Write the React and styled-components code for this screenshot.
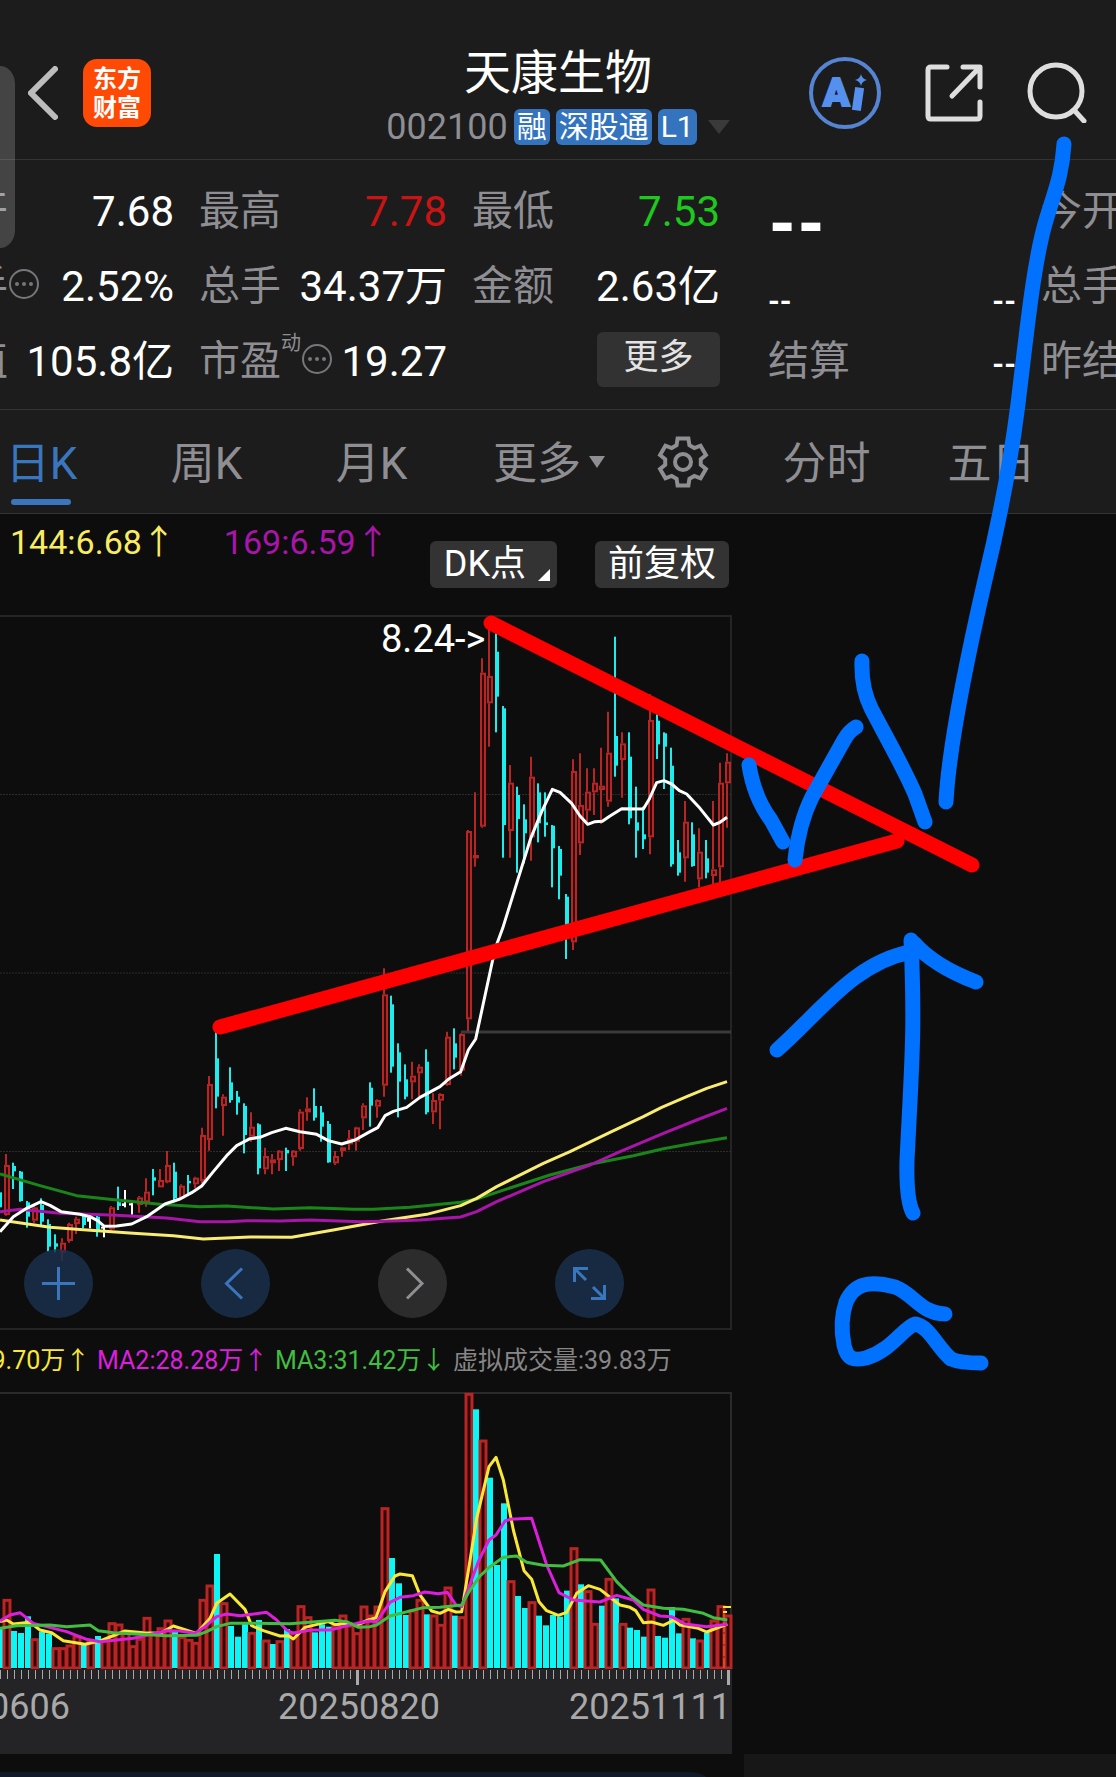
import styled, { createGlobalStyle, css } from "styled-components";

const GlobalStyle = createGlobalStyle`
  * {
    box-sizing: border-box;
  }

  body {
    margin: 0;
    background-color: #0d0d0d;
    color: white;
    font-family: Roboto, "Noto Sans CJK SC", sans-serif;
    overflow-x: hidden;
  }

  button {
    border: none;
    padding: 0;
    background: none;
    color: inherit;
    font-family: inherit;
    cursor: pointer;
  }

  svg {
    display: block;
  }
`;

const RED = "#b92525";
const CYAN = "#1eeded";

// [direction, high, body top, body bottom, low], one unit is a third of a pixel
const earlyCandles = [
  ["d", 720, 727, 772, 775], ["u", 612, 645, 795, 797], ["d", 638, 648, 664, 717], ["d", 663, 665, 753, 755],
  ["d", 753, 757, 800, 833], ["u", 765, 772, 812, 818], ["d", 745, 765, 815, 825], ["d", 808, 822, 890, 905],
  ["d", 853, 880, 890, 907], ["u", 865, 878, 908, 933], ["u", 818, 822, 873, 878], ["u", 800, 806, 822, 852],
  ["d", 797, 800, 825, 835], ["f", 803, 803, 815, 835], ["d", 797, 800, 845, 860], ["f", 830, 830, 836, 862],
  ["u", 768, 772, 838, 840], ["d", 710, 757, 768, 780], ["f", 720, 760, 768, 772], ["f", 760, 760, 766, 794],
  ["u", 738, 742, 765, 788], ["u", 685, 725, 757, 770], ["d", 657, 682, 692, 736], ["u", 657, 690, 712, 712],
  ["u", 603, 645, 697, 700], ["d", 638, 665, 745, 757], ["u", 703, 707, 745, 745], ["d", 675, 693, 700, 730],
  ["u", 680, 683, 703, 715], ["u", 533, 555, 693, 700], ["u", 378, 402, 570, 602], ["d", 245, 325, 440, 475],
  ["u", 433, 440, 468, 557], ["d", 352, 397, 450, 458], ["d", 423, 440, 458, 494], ["d", 460, 468, 555, 610],
  ["u", 487, 530, 560, 575], ["d", 520, 523, 655, 673], ["u", 593, 618, 658, 673], ["u", 612, 628, 640, 673],
  ["u", 600, 602, 630, 663], ["d", 593, 600, 610, 663], ["u", 600, 602, 622, 647], ["u", 478, 485, 597, 602],
  ["u", 442, 475, 487, 512], ["d", 415, 468, 503, 512], ["d", 468, 487, 530, 575], ["d", 513, 522, 637, 638],
  ["u", 603, 618, 640, 645], ["u", 590, 592, 603, 620], ["u", 540, 565, 583, 600], ["u", 530, 532, 575, 602],
  ["u", 460, 466, 505, 540], ["d", 397, 413, 467, 530], ["u", 448, 450, 470, 503], ["u", 55, 133, 407, 440],
  ["d", 137, 163, 350, 368], ["d", 280, 307, 395, 502], ["d", 343, 388, 440, 448], ["u", 335, 377, 397, 448],
  ["u", 343, 350, 370, 440], ["d", 298, 335, 487, 493], ["u", 430, 450, 487, 522], ["u", 430, 432, 452, 538],
  ["u", 245, 260, 405, 407], ["d", 235, 280, 323, 358], ["u", 250, 252, 362, 377],
];

const lateCandles = [
  ["u", 690, 693, 1258, 1293], ["u", 577, 765, 775, 800], ["u", 175, 218, 680, 683], ["u", 60, 228, 310, 440],
  ["d", 100, 155, 290, 397], ["d", 318, 325, 675, 773], ["u", 495, 548, 693, 773], ["d", 560, 585, 657, 818],
  ["d", 613, 658, 700, 790], ["u", 470, 530, 712, 782], ["d", 550, 577, 670, 727], ["d", 577, 667, 675, 710],
  ["d", 675, 677, 745, 862], ["d", 738, 747, 827, 898], ["d", 882, 890, 975, 1077], ["u", 478, 513, 1027, 1050],
  ["u", 460, 615, 730, 765], ["u", 505, 575, 632, 665], ["u", 505, 548, 577, 645], ["u", 443, 557, 570, 672],
  ["u", 335, 458, 605, 620], ["d", 110, 408, 497, 530], ["u", 397, 430, 480, 593], ["d", 397, 470, 655, 673],
  ["d", 560, 667, 692, 773], ["d", 620, 703, 718, 747], ["u", 283, 360, 712, 763], ["d", 343, 362, 433, 477],
  ["d", 397, 400, 440, 567], ["d", 443, 497, 793, 800], ["d", 720, 757, 818, 827], ["u", 603, 665, 775, 845],
  ["d", 667, 703, 798, 800], ["u", 685, 755, 838, 862], ["d", 720, 775, 818, 835], ["u", 603, 808, 828, 855],
  ["u", 488, 548, 802, 850], ["u", 460, 485, 550, 683],
];

const candles = [
  ...earlyCandles.map(([dir, ...v]) => [dir, ...v.map((n) => 335 + n / 3)]),
  ...lateCandles.map(([dir, ...v]) => [dir, ...v.map((n) => n / 3 - 15)]),
];

const priceLines = [
  {
    color: "#1a861a",
    points: "0,672 120,707 230,737 350,750 480,763 600,770 680,768 820,777 930,773 1060,778 1120,778 1230,772 1382,757 1430,747 1490,727 1650,675 1770,643 1900,617 1990,596 2080,580 2181,563",
  },
  {
    color: "#f9ec72",
    points: "0,810 150,832 250,839 400,850 520,857 610,867 750,861 875,862 1000,840 1150,812 1280,793 1382,767 1430,745 1490,710 1630,640 1710,605 1830,547 1930,500 1985,472 2060,440 2120,415 2181,395",
  },
  {
    color: "#a915a9",
    points: "0,785 60,778 180,790 350,796 500,804 600,815 680,815 740,812 840,813 930,810 1080,815 1180,813 1260,810 1382,801 1430,785 1490,755 1630,695 1770,645 1860,605 1990,550 2090,510 2181,475",
  },
  {
    color: "#ffffff",
    points: "0,845 40,800 80,775 123,755 150,766 183,785 240,793 270,800 293,812 313,829 350,828 395,822 440,800 495,762 540,747 575,728 605,708 640,665 680,617 710,587 750,566 780,562 815,548 857,535 900,545 950,553 985,572 1025,582 1065,570 1110,545 1133,533 1155,497 1180,484 1220,472 1260,442 1320,410 1345,388 1382,365 1405,300 1427,267 1478,30 1492,-22 1508,-65 1550,-200 1592,-335 1625,-415 1657,-482 1680,-473 1715,-440 1740,-402 1763,-377 1785,-385 1807,-386 1830,-402 1865,-424 1930,-423 1948,-453 1970,-502 1992,-508 2015,-498 2038,-478 2060,-468 2100,-425 2140,-375 2160,-383 2181,-398",
  },
];

const volumes = [
  "d925", "u838", "d933", "d939", "d889", "u956", "d935", "d941", "u983", "u983", "u975", "u948", "d970", "u963",
  "d948", "u960", "u908", "u912", "u935", "u977", "u955", "u892", "u940", "u923", "u900", "d935", "u950", "u958",
  "u967", "u838", "u795", "d702", "u848", "d918", "d950", "d910", "u937", "d900", "u960", "d972", "u962", "d927",
  "u935", "u857", "u890", "d937", "d913", "d920", "u912", "u885", "u915", "u938", "u858", "u885", "u858", "u563",
  "d714", "d790", "d885", "u870", "u838", "d883", "u885", "u913", "u801", "d887", "u890", "u220", "d268", "u360",
  "d473", "d735", "d550", "u782", "d828", "d864", "u845", "d887", "d916", "d885", "d890", "d812", "u683", "d793",
  "u812", "u910", "d857", "u775", "d835", "u910", "d923", "d930", "d950", "u807", "d948", "d953", "d861", "d940",
  "u895", "d955", "u960", "d938", "u900", "u857", "u885",
];

const volumeLines = [
  {
    color: "#fbe836",
    points: "0,905 20,900 40,912 90,907 120,930 155,938 190,962 255,973 300,963 375,933 430,938 480,940 520,918 590,940 630,895 650,850 690,822 735,868 755,917 790,932 840,948 865,947 880,957 915,922 985,905 1005,914 1040,910 1070,915 1105,900 1128,893 1155,815 1185,768 1200,762 1237,767 1260,825 1295,873 1320,880 1345,868 1368,876 1385,875 1407,740 1430,595 1467,440 1488,412 1510,480 1540,630 1572,752 1595,778 1617,845 1640,872 1675,886 1700,877 1730,820 1765,797 1800,808 1860,855 1890,862 1907,872 1930,908 1955,906 1990,916 2022,900 2040,915 2095,925 2120,936 2182,912",
  },
  {
    color: "#dd1edd",
    points: "0,903 30,885 60,878 100,910 200,935 260,958 300,965 400,955 500,932 540,933 585,940 615,920 650,890 680,882 720,887 800,877 830,900 860,930 880,940 930,930 990,930 1070,910 1110,903 1130,905 1170,847 1200,832 1240,827 1275,816 1315,821 1342,817 1368,855 1385,860 1407,800 1435,725 1467,660 1488,645 1515,603 1530,598 1595,595 1640,735 1677,818 1720,840 1800,846 1850,826 1900,840 1930,868 1980,888 2015,890 2055,912 2120,920 2182,913",
  },
  {
    color: "#41bd41",
    points: "0,925 50,917 150,915 200,920 270,915 295,932 340,938 420,943 500,947 590,946 620,935 650,920 690,910 760,910 870,911 1005,901 1040,905 1075,922 1110,920 1130,915 1170,888 1270,863 1320,862 1385,855 1407,815 1440,768 1470,740 1510,712 1550,708 1580,727 1630,736 1690,738 1740,719 1802,720 1850,785 1890,825 1930,855 1990,865 2050,868 2110,880 2140,893 2182,900",
  },
];

const scalePoints = (points, base) =>
  points
    .split(" ")
    .map((p) => {
      const [x, y] = p.split(",");
      return `${x / 3},${base + y / 3}`;
    })
    .join(" ");

const Page = styled.div`
  position: relative;
  overflow: hidden;
`;

const Header = styled.header`
  display: grid;
  grid-template-columns: 1fr auto 1fr;
  align-items: center;
  padding: 40px 28px 14px;
  background-color: #1c1c1c;
  border-bottom: 1px solid #333;
`;

const HeaderSide = styled.div`
  display: flex;
  align-items: center;
  justify-content: ${(props) => (props.$end ? "flex-end" : "flex-start")};
  gap: ${(props) => (props.$end ? "44px" : "25px")};
`;

const Logo = styled.div`
  width: 68px;
  height: 68px;
  padding: 3px 0;
  border-radius: 14px;
  background-color: #ff4a05;
  font-family: "Noto Sans CJK SC", sans-serif;
  font-size: 24px;
  font-weight: 700;
  line-height: 29px;
  text-align: center;
`;

const TitleBlock = styled.div`
  display: flex;
  flex-direction: column;
  align-items: center;
  gap: 3px;
`;

const Title = styled.h1`
  margin: 0;
  font-size: 47px;
  font-weight: 400;
  line-height: 66px;
`;

const SubTitle = styled.div`
  display: flex;
  align-items: center;
  gap: 6px;
  color: #8e8e93;
  font-size: 36px;
  line-height: 36px;
`;

const Tag = styled.span`
  padding: 0 3px;
  border-radius: 6px;
  background-color: #3474bf;
  color: white;
  font-size: 30px;
  line-height: 36px;
`;

const Caret = styled.span`
  border: solid transparent;
  border-width: ${(props) => (props.$small ? "12px 8px 0" : "14px 11px 0")};
  border-top-color: ${(props) => (props.$small ? "#8e8e93" : "#3a3a3a")};
  margin: ${(props) => (props.$small ? "4px 0 0 8px" : "0 0 0 5px")};
`;

const Split = styled.div`
  display: grid;
  grid-template-columns: 2fr 1fr;
`;

const Bar = styled(Split)`
  background-color: #1c1c1c;
  border-bottom: 1px solid #333;
`;

const Pane = styled.div`
  min-width: 0;
  overflow: hidden;
`;

const Stats = styled.div`
  display: grid;
  grid-template-columns: repeat(3, 248px);
  grid-auto-rows: 75px;
  column-gap: 25px;
  padding: 14px 0 10px;
  margin-left: ${(props) => (props.$scrolled ? "-74px" : "24px")};
`;

const Stat = styled.div`
  display: flex;
  align-items: center;
  justify-content: space-between;
  font-size: 42px;
  line-height: 75px;
  white-space: nowrap;
`;

const Label = styled.span`
  display: flex;
  align-items: center;
  color: #8e8e93;
  font-size: 41px;

  svg {
    margin-bottom: 6px;
  }
`;

const Sup = styled.sup`
  align-self: flex-start;
  font-size: 20px;
  line-height: 38px;
`;

const Value = styled.span`
  color: ${(props) => props.$color || "white"};
`;

const Empty = styled.span`
  padding-top: ${(props) => (props.$low ? "28px" : "4px")};
  font-size: ${(props) => (props.$large ? "64px" : "30px")};
  font-weight: ${(props) => (props.$large ? 900 : 700)};
  line-height: 46px;
`;

const MoreButton = styled.button`
  width: 123px;
  height: 55px;
  margin: 0 0 4px auto;
  padding-bottom: 4px;
  border-radius: 6px;
  background-color: #323232;
  color: #e3e3e3;
  font-size: 35px;
  line-height: 50px;
`;

const Tabs = styled.nav`
  display: flex;
  margin-left: ${(props) => (props.$scrolled ? "-41px" : "0")};
`;

const Tab = styled.button`
  position: relative;
  display: flex;
  flex: none;
  align-items: center;
  justify-content: center;
  width: ${(props) => props.$width || 165}px;
  height: 103px;
  padding-bottom: ${(props) => (props.$icon ? "0" : "4px")};
  color: #8e8e93;
  font-size: 44px;

  ${(props) =>
    props.$active &&
    css`
      color: #3a76bd;

      &::after {
        content: "";
        position: absolute;
        left: 52px;
        bottom: 8px;
        width: 60px;
        height: 6px;
        border-radius: 3px;
        background-color: #3a76bd;
      }
    `}
`;

const Toolbar = styled.div`
  display: flex;
  justify-content: space-between;
  height: 101px;
  padding: 8px 15px 0 10px;
`;

const Averages = styled.div`
  display: flex;
  gap: 48px;
  font-size: 34px;
  line-height: 40px;
`;

const Actions = styled.div`
  display: flex;
  gap: 38px;
  padding-top: 19px;
`;

const ActionButton = styled.button`
  position: relative;
  height: 47px;
  padding: ${(props) => (props.$menu ? "0 31px 0 14px" : "0 13px")};
  border-radius: 6px;
  background-color: #333;
  color: white;
  font-size: 36px;
  line-height: 47px;

  ${(props) =>
    props.$menu &&
    css`
      &::after {
        content: "";
        position: absolute;
        right: 7px;
        bottom: 7px;
        border: solid transparent;
        border-width: 0 0 12px 12px;
        border-bottom-color: white;
      }
    `}
`;

const Chart = styled.div`
  position: relative;

  > svg {
    width: 100%;
    height: auto;
  }
`;

const ChartControls = styled.div`
  position: absolute;
  left: 24px;
  bottom: 12px;
  display: flex;
  gap: 108px;
`;

const RoundButton = styled.button`
  width: 69px;
  height: 69px;
  border-radius: 50%;
  background-color: ${(props) => (props.$muted ? "rgba(50, 50, 50, 0.85)" : "rgba(26, 48, 76, 0.85)")};
  color: ${(props) => (props.$muted ? "#8e8e93" : "#3a76bd")};
`;

const VolumeLegend = styled.div`
  display: grid;
  grid-template-columns: repeat(4, 178px);
  margin-left: -81px;
  font-size: 25px;
  line-height: 62px;
  white-space: nowrap;
`;

const Colored = styled.span`
  color: ${(props) => props.$color};
`;

const Axis = styled.div`
  height: 85px;
  margin-right: 12px;
  background-color: #242426;
  overflow: hidden;
`;

const Dates = styled.div`
  display: grid;
  grid-template-columns: 370px 291px auto;
  margin-left: -92px;
  color: #a9a9a9;
  font-size: 36px;
  line-height: 40px;
`;

const Peek = styled.div`
  height: 23px;
  padding-top: 18px;
  overflow: hidden;
`;

const PeekBar = styled.div`
  height: 60px;
  margin-right: 24px;
  border-radius: 0 60px 60px 0;
  background-color: #111b28;
`;

const SidePane = styled(Pane)`
  display: flex;
  flex-direction: column;
  justify-content: flex-end;
`;

const SideFooter = styled.div`
  height: 23px;
  background-color: #171718;
`;

const EdgeHandle = styled.div`
  position: absolute;
  left: 0;
  top: 66px;
  width: 15px;
  height: 182px;
  border-radius: 0 15px 15px 0 / 0 18px 18px 0;
  background-color: rgba(255, 255, 255, 0.18);
`;

const Drawing = styled.svg`
  position: absolute;
  top: 0;
  left: 0;
  width: 100%;
  pointer-events: none;
`;

const BackIcon = () => (
  <svg width="30" height="54" fill="none" stroke="#bdbdbd" strokeWidth="6" strokeLinecap="round">
    <path d="M27 3 3 27l24 24" strokeLinejoin="miter" />
  </svg>
);

const AiIcon = () => (
  <svg width="72" height="72" fill="#5590ee">
    <circle cx="36" cy="36" r="34" fill="none" stroke="#5585d2" strokeWidth="4" />
    <text x="14" y="49" fontSize="39" fontWeight="900" fontFamily="Roboto" stroke="#5590ee" strokeWidth="2">
      A
    </text>
    <path d="M50 35l-2 14" stroke="#5590ee" strokeWidth="9" strokeLinecap="square" />
    <path d="M52 17q1 5 6 6-5 1-6 6-1-5-6-6 5-1 6-6z" />
  </svg>
);

const ShareIcon = () => (
  <svg width="58" height="58" fill="none" stroke="#dedede" strokeWidth="5" strokeLinecap="round" strokeLinejoin="round">
    <path d="M22 3H6Q3 3 3 6v46q0 3 3 3h46q3 0 3-3V38M38 3h17v20M54 4 27 32" />
  </svg>
);

const SearchIcon = () => (
  <svg width="61" height="61" fill="none" stroke="#dedede" strokeWidth="5" strokeLinecap="round">
    <circle cx="29" cy="29" r="26" />
    <path d="M47 48l10 11" />
  </svg>
);

const InfoIcon = () => (
  <svg width="32" height="32" fill="#77777b">
    <circle cx="16" cy="16" r="14" fill="none" stroke="#77777b" strokeWidth="2" />
    <circle cx="9" cy="16" r="2" />
    <circle cx="16" cy="16" r="2" />
    <circle cx="23" cy="16" r="2" />
  </svg>
);

const gearPoints = Array.from({ length: 6 })
  .flatMap((_, i) =>
    [[-21, 18], [-13, 24], [13, 24], [21, 18]].map(([offset, r]) => {
      const a = ((i * 60 - 90 + offset) * Math.PI) / 180;
      return `${27 + r * Math.cos(a)},${27 + r * Math.sin(a)}`;
    })
  )
  .join(" ");

const GearIcon = () => (
  <svg width="54" height="54" fill="none" stroke="#8e8e93" strokeWidth="4">
    <polygon points={gearPoints} />
    <circle cx="27" cy="27" r="8" />
  </svg>
);

const ControlIcon = ({ d }) => (
  <svg width="69" height="69" fill="none" stroke="currentColor" strokeWidth="3">
    <path d={d} />
  </svg>
);

const Candle = ({ index, candle }) => {
  const [dir, high, top, bottom, low] = candle;
  const x = index * 7;
  if (dir === "u") {
    return (
      <g stroke={RED} strokeWidth="2">
        <path d={`M${x - 1} ${high}V${top}M${x - 1} ${bottom}V${low}`} />
        <rect x={x - 2} y={top + 1} width="4" height={Math.max(bottom - top - 2, 1)} fill="#300404" />
      </g>
    );
  }
  const color = dir === "d" ? CYAN : "#ffffff";
  return (
    <g fill={color}>
      <rect x={x - 2} y={high} width="2" height={low - high} />
      <rect x={dir === "d" ? x - 2 : x - 4} y={top} width="4" height={bottom - top} />
    </g>
  );
};

const PriceChart = () => (
  <svg viewBox="0 0 744 715">
    <path d="M0 1H731V714H0" fill="none" stroke="#242424" strokeWidth="2" />
    <path d="M0 179.500H731M0 358H731M0 536.500H731" stroke="#2c2c2c" strokeDasharray="2 1" />
    <path d="M461 417H731" stroke="#3a3a3a" strokeWidth="3" />
    {candles.map((candle, i) => (
      <Candle key={i} index={i} candle={candle} />
    ))}
    {priceLines.map((line) => (
      <polyline
        key={line.color}
        points={scalePoints(line.points, 335)}
        fill="none"
        stroke={line.color}
        strokeWidth="3"
        strokeLinejoin="round"
      />
    ))}
    <text x="381" y="37" fill="white" fontSize="38">
      8.24-&gt;
    </text>
  </svg>
);

const VolumeChart = () => (
  <svg viewBox="0 0 744 277">
    <path d="M0 1H731V277" fill="none" stroke="#2a2a2a" strokeWidth="2" />
    {volumes.map((v, i) => {
      const top = Number(v.slice(1)) / 3 - 72;
      return v[0] === "u" ? (
        <rect key={i} x={i * 7 - 3} y={top + 1} width="6" height={275 - top} fill="#300404" stroke={RED} strokeWidth="3" />
      ) : (
        <rect key={i} x={i * 7 - 3} y={top} width="6" height={276 - top} fill="#0cf6f6" />
      );
    })}
    <path d="M724 276V222" stroke="#d97a2b" strokeDasharray="10 2" />
    <path d="M723 215H731M723 220H727" stroke="#fbe836" strokeWidth="2" />
    {volumeLines.map((line) => (
      <polyline
        key={line.color}
        points={scalePoints(line.points, -72)}
        fill="none"
        stroke={line.color}
        strokeWidth="3"
        strokeLinejoin="round"
      />
    ))}
  </svg>
);

const Ticks = () => (
  <svg width="732" height="18" fill="#a9a9a9">
    {Array.from({ length: 105 }).map((_, i) => (
      <rect key={i} x={i * 7} y="1" width="1" height="9" />
    ))}
    <rect x="356" y="1" width="3" height="15" />
    <rect x="727" y="1" width="3" height="15" />
  </svg>
);

const Markup = () => (
  <Drawing viewBox="0 0 1116 1777" fill="none" strokeWidth="15" strokeLinecap="round" strokeLinejoin="round">
    <path d="M491 623 972 865M220 1027 897 841" stroke="#ff0000" />
    <g stroke="#0072ff">
      <path d="M749 765Q754 797 771 820L783 842" />
      <path d="M856 727Q849 731 844 740L812 797Q799 823 795 860" />
      <path d="M862 661Q861 688 871 708C880 726 902 764 915 794Q920 808 925 822" />
      <path d="M1064 144C1062 174 1056 188 1047 217C1034 258 1027 330 1018 404C1011 460 999 522 985 580C971 641 949 742 946 802" />
      <path d="M777 1050C820 1012 855 962 911 952" />
      <path d="M911 940C915 1030 912 1060 907 1160Q906 1200 913 1213" />
      <path d="M914 943Q934 966 976 982" />
      <path d="M945 1314C920 1313 914 1294 895 1287C868 1280 854 1284 846 1302C841 1317 841 1330 844 1345C847 1359 853 1361 866 1358C892 1350 903 1328 915 1324C929 1326 937 1347 951 1359Q960 1363 981 1363" />
    </g>
  </Drawing>
);

export default function App() {
  return (
    <Page>
      <GlobalStyle />
      <Header>
        <HeaderSide>
          <button aria-label="返回">
            <BackIcon />
          </button>
          <Logo>
            东方
            <br />
            财富
          </Logo>
        </HeaderSide>
        <TitleBlock>
          <Title>天康生物</Title>
          <SubTitle>
            <span>002100</span>
            <Tag>融</Tag>
            <Tag>深股通</Tag>
            <Tag>L1</Tag>
            <Caret />
          </SubTitle>
        </TitleBlock>
        <HeaderSide $end>
          <button aria-label="AI">
            <AiIcon />
          </button>
          <button aria-label="分享">
            <ShareIcon />
          </button>
          <button aria-label="搜索">
            <SearchIcon />
          </button>
        </HeaderSide>
      </Header>

      <Bar>
        <Pane>
          <Stats $scrolled>
            <Stat>
              <Label>今开</Label>
              <Value>7.68</Value>
            </Stat>
            <Stat>
              <Label>最高</Label>
              <Value $color="#c81414">7.78</Value>
            </Stat>
            <Stat>
              <Label>最低</Label>
              <Value $color="#1ec81e">7.53</Value>
            </Stat>
            <Stat>
              <Label>
                换手
                <InfoIcon />
              </Label>
              <Value>2.52%</Value>
            </Stat>
            <Stat>
              <Label>总手</Label>
              <Value>34.37万</Value>
            </Stat>
            <Stat>
              <Label>金额</Label>
              <Value>2.63亿</Value>
            </Stat>
            <Stat>
              <Label>市值</Label>
              <Value>105.8亿</Value>
            </Stat>
            <Stat>
              <Label>
                市盈
                <Sup>动</Sup>
                <InfoIcon />
              </Label>
              <Value>19.27</Value>
            </Stat>
            <Stat>
              <MoreButton>更多</MoreButton>
            </Stat>
          </Stats>
        </Pane>
        <Pane>
          <Stats>
            <Stat>
              <Empty $large $low>
                --
              </Empty>
            </Stat>
            <Stat>
              <Label>今开</Label>
            </Stat>
            <span />
            <Stat>
              <Empty $low>--</Empty>
              <Empty $low>--</Empty>
            </Stat>
            <Stat>
              <Label>总手</Label>
            </Stat>
            <span />
            <Stat>
              <Label>结算</Label>
              <Empty>--</Empty>
            </Stat>
            <Stat>
              <Label>昨结</Label>
            </Stat>
          </Stats>
        </Pane>
      </Bar>

      <Bar>
        <Pane>
          <Tabs $scrolled>
            <Tab $active>日K</Tab>
            <Tab>周K</Tab>
            <Tab>月K</Tab>
            <Tab $width={190}>
              更多
              <Caret $small />
            </Tab>
            <Tab $width={78} $icon aria-label="设置">
              <GearIcon />
            </Tab>
          </Tabs>
        </Pane>
        <Pane>
          <Tabs>
            <Tab>分时</Tab>
            <Tab>五日</Tab>
          </Tabs>
        </Pane>
      </Bar>

      <Split>
        <Pane>
          <Toolbar>
            <Averages>
              <Colored $color="#f9ec62">144:6.68↑</Colored>
              <Colored $color="#a915a9">169:6.59↑</Colored>
            </Averages>
            <Actions>
              <ActionButton $menu>DK点</ActionButton>
              <ActionButton>前复权</ActionButton>
            </Actions>
          </Toolbar>
          <Chart>
            <PriceChart />
            <ChartControls>
              <RoundButton aria-label="放大">
                <ControlIcon d="M34.500 18v33M18 34.500h33" />
              </RoundButton>
              <RoundButton aria-label="向左">
                <ControlIcon d="M41 19.500 25.500 34.500 41 49.500" />
              </RoundButton>
              <RoundButton $muted aria-label="向右">
                <ControlIcon d="M29 19.500 44 34.500 29 49.500" />
              </RoundButton>
              <RoundButton aria-label="全屏">
                <ControlIcon d="M33 19.500H19.500V33M20 20 31 31M36 49.500H49.500V36M49 49 38 38" />
              </RoundButton>
            </ChartControls>
          </Chart>
          <VolumeLegend>
            <Colored $color="#fbe836">MA1:29.70万↑</Colored>
            <Colored $color="#dd1edd">MA2:28.28万↑</Colored>
            <Colored $color="#41bd41">MA3:31.42万↓</Colored>
            <Colored $color="#868686">虚拟成交量:39.83万</Colored>
          </VolumeLegend>
          <Chart>
            <VolumeChart />
          </Chart>
          <Axis>
            <Ticks />
            <Dates>
              <span>20250606</span>
              <span>20250820</span>
              <span>20251111</span>
            </Dates>
          </Axis>
          <Peek>
            <PeekBar />
          </Peek>
        </Pane>
        <SidePane>
          <SideFooter />
        </SidePane>
      </Split>

      <EdgeHandle />
      <Markup />
    </Page>
  );
}
